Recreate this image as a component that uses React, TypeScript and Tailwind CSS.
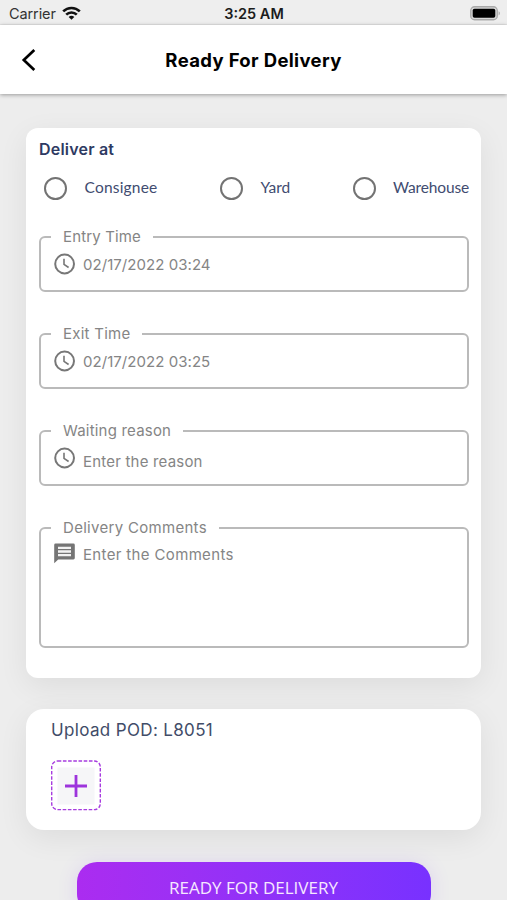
import React, { useState } from 'react';

const PLACES = [
  { id: 'consignee', label: 'Consignee', className: 'w-[176px]', text: 'tracking-[0.2px]' },
  { id: 'yard', label: 'Yard', className: 'w-[132.5px]', text: 'tracking-[0px]' },
  { id: 'warehouse', label: 'Warehouse', className: '', text: 'tracking-[-0.15px]' },
];

const StatusBar: React.FC = () => (
  <div className="flex h-[25px] shrink-0 items-center justify-between border-b border-[#e4e4e4] bg-[#eeeeee] pt-[3px] pr-[6px] pl-[9px] text-[#1c1c1c]">
    <div className="flex w-[100px] items-center gap-[6px]">
      <span className="text-[14.5px] leading-5 tracking-[-0.1px] text-[#333]">Carrier</span>
      <svg width="19" height="14" viewBox="0 0 19 14" fill="none" stroke="#111" strokeWidth="2.6" className="-mt-[2px]">
        <path d="M1.2 5.4a11.8 11.8 0 0 1 16.6 0" />
        <path d="M4.2 8.7a7.5 7.5 0 0 1 10.6 0" />
        <path d="M9.5 13.8 6.7 11a3.9 3.9 0 0 1 5.6 0Z" fill="#111" stroke="none" />
      </svg>
    </div>
    <span className="-ml-[2px] text-[14.5px] leading-5 font-semibold">3:25 AM</span>
    <div className="-mt-[1px] flex w-[100px] justify-end">
      <svg width="31" height="15" viewBox="0 0 31 15">
        <rect x="0.75" y="0.75" width="26.5" height="13" rx="3.8" fill="#d8d8d8" stroke="#a9a9a9" strokeWidth="1.3" />
        <rect x="2.7" y="2.7" width="22.6" height="9.1" rx="1.8" fill="#000" />
        <path d="M28.6 5.2c1.7.6 1.7 3.6 0 4.2Z" fill="#a9a9a9" />
      </svg>
    </div>
  </div>
);

const ClockIcon: React.FC = () => (
  <svg
    viewBox="0 0 24 24"
    fill="none"
    stroke="#777"
    strokeWidth="2"
    className="-mx-[1px] mt-[5px] size-[24px] shrink-0"
  >
    <circle cx="11.6" cy="12" r="9.4" />
    <path d="M11 6.8v5.5l4.6 3.2" strokeWidth="1.6" />
  </svg>
);

const CommentIcon: React.FC = () => (
  <svg viewBox="0 0 21 21" className="mt-[5px] mr-[1px] size-[21px] shrink-0">
    <path d="M1.6 0.5h17.8q1.4 0 1.4 1.4v13.2q0 1.4-1.4 1.4H4.2L0.2 20.3V1.9Q0.2 0.5 1.6 0.5Z" fill="#757575" />
    <path d="M4 3.7h13v2.4H4ZM4 7.3h13v2.4H4ZM4 10.9h13v2.4H4Z" fill="#f2f2f2" />
  </svg>
);

interface FieldProps {
  label: string;
  legendClass: string;
  className?: string;
  children: React.ReactNode;
}

const Field: React.FC<FieldProps> = ({ label, legendClass, className = 'h-[65px]', children }) => (
  <fieldset className={`-mr-[1px] rounded-[6px] border-2 border-[#bababa] pl-[13px] ${className}`}>
    <legend className={`ml-[-3px] h-5 px-3 text-[15px] leading-[19px] whitespace-nowrap text-[#858585] ${legendClass}`}>
      {label}
    </legend>
    <div className="flex gap-[7px]">{children}</div>
  </fieldset>
);

const inputClass =
  'min-w-0 flex-1 bg-transparent text-[15px] leading-5 text-[#858585] outline-none placeholder:text-[#858585]';

export default function App() {
  const [place, setPlace] = useState('');
  const [reason, setReason] = useState('');
  const [comments, setComments] = useState('');

  return (
    <div className="flex h-[900px] w-[507px] flex-col overflow-hidden bg-[#ededed] font-['Inter',sans-serif]">
      <StatusBar />

      <header className="z-10 grid h-[69px] shrink-0 grid-cols-[60px_1fr_60px] items-center bg-white shadow-[0_1px_4px_rgba(0,0,0,0.35)]">
        <button type="button" aria-label="Back" className="pl-[21px]">
          <svg width="16" height="24" viewBox="0 0 16 24" fill="none" stroke="#000" strokeWidth="2.7">
            <path d="M13.3 2 2.8 12l10.5 10" />
          </svg>
        </button>
        <h1 className="pt-[2px] text-center text-[18.5px] font-bold tracking-[0.35px] whitespace-nowrap text-black">
          Ready For Delivery
        </h1>
      </header>

      <main className="flex flex-col px-[26px] pt-[34px]">
        <section className="h-[550px] rounded-[12px] bg-white px-[13px] pt-[11px] shadow-[0_8px_30px_rgba(0,0,0,0.07)]">
          <h2 className="text-[16px] leading-5 font-semibold tracking-[0.2px] text-[#2e3a62]">Deliver at</h2>

          <div className="mt-[17px] flex h-6 items-center pl-[5px]">
            {PLACES.map((item) => (
              <label key={item.id} className={`flex shrink-0 cursor-pointer items-center gap-[17.5px] ${item.className}`}>
                <input
                  type="radio"
                  name="place"
                  checked={place === item.id}
                  onChange={() => setPlace(item.id)}
                  className="size-[23px] shrink-0 appearance-none rounded-full border-[2px] border-[#737373] checked:border-8"
                />
                <span className={`-mt-[3px] font-['Lato',sans-serif] text-[15.5px] leading-5 whitespace-nowrap text-[#414c70] ${item.text}`}>
                  {item.label}
                </span>
              </label>
            ))}
          </div>

          <div className="mt-[27px] flex flex-col gap-8">
            <Field label="Entry Time" legendClass="tracking-[0.15px]">
              <ClockIcon />
              <span className="mt-[8px] text-[15px] leading-5 tracking-[0.05px] text-[#858585]">02/17/2022 03:24</span>
            </Field>
            <Field label="Exit Time" legendClass="tracking-[0.25px]">
              <ClockIcon />
              <span className="mt-[8px] text-[15px] leading-5 tracking-[0.05px] text-[#858585]">02/17/2022 03:25</span>
            </Field>
            <Field label="Waiting reason" legendClass="tracking-[0.2px]">
              <ClockIcon />
              <input
                value={reason}
                onChange={(e) => setReason(e.target.value)}
                placeholder="Enter the reason"
                className={`mt-[11px] h-5 tracking-[0.2px] ${inputClass}`}
              />
            </Field>
            <Field label="Delivery Comments" legendClass="tracking-[0.3px]" className="h-[130px]">
              <CommentIcon />
              <textarea
                value={comments}
                onChange={(e) => setComments(e.target.value)}
                placeholder="Enter the Comments"
                className={`mt-[7px] h-[90px] resize-none tracking-[0.35px] ${inputClass}`}
              />
            </Field>
          </div>
        </section>

        <section className="mt-[31px] h-[121px] rounded-[18px] bg-white px-[25px] pt-[11px] shadow-[0_8px_30px_rgba(0,0,0,0.07)]">
          <h2 className="text-[17px] leading-5 tracking-[0.35px] whitespace-nowrap text-[#414c68]">Upload POD: L8051</h2>
          <button
            type="button"
            aria-label="Add"
            className="mt-[20px] flex size-[51px] items-center justify-center"
          >
            <svg width="51" height="51" viewBox="0 0 51 51" fill="none">
              <rect x="0.7" y="1" width="48.6" height="48.6" rx="6" stroke="#a73cdf" strokeWidth="1.4" strokeDasharray="3.6 1.6" />
              <path d="M6.5 7.5h37v37h-37Z" fill="#f6f6f8" />
              <path d="M25 15v22M14 26h22" stroke="#9d34dc" strokeWidth="2.8" />
            </svg>
          </button>
        </section>

        <button
          type="button"
          className="mx-auto mt-8 h-[52px] w-[354px] rounded-[20px] bg-linear-to-r from-[#ab2cf0] to-[#7831ff] font-['Open_Sans',sans-serif] text-[17px] whitespace-nowrap text-[#f6e8ff] shadow-[0_2px_20px_rgba(130,60,255,0.15)]"
        >
          READY FOR DELIVERY
        </button>
      </main>
    </div>
  );
}
